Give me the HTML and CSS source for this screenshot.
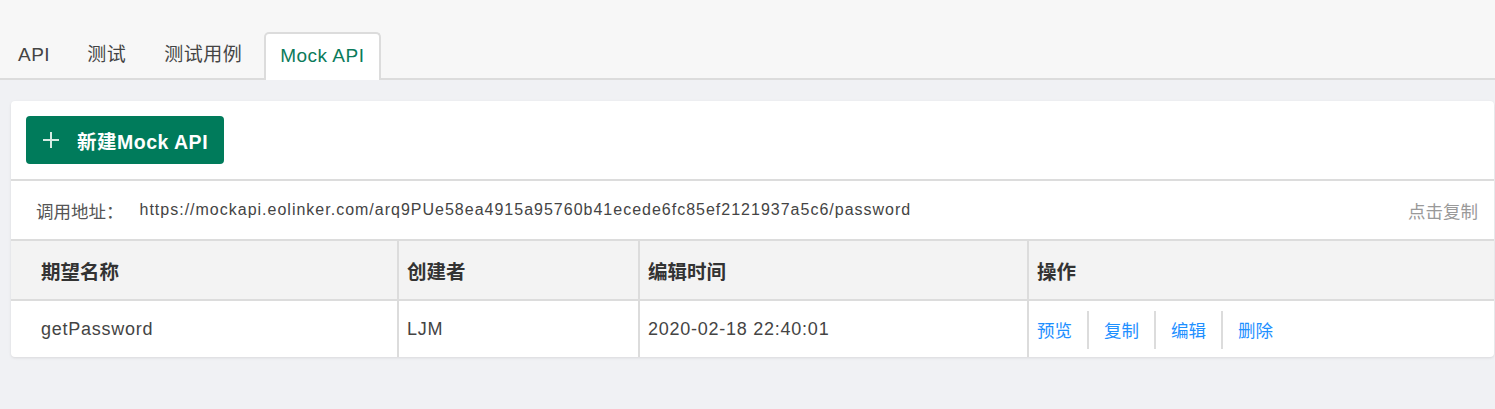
FILE: index.html
```html
<!DOCTYPE html>
<html lang="zh">
<head>
<meta charset="utf-8">
<title>Mock API</title>
<link rel="stylesheet" href="styles.css">
</head>
<body>
<div class="topbar">
  <div class="tabs">
    <div class="tab first">API</div>
    <div class="tab">测试</div>
    <div class="tab">测试用例</div>
    <div class="tab active">Mock API</div>
  </div>
</div>
<div class="main">
  <div class="card">
    <div class="toolbar">
      <button class="btn-new"><span class="plus"></span><span class="btn-label">新建Mock API</span></button>
    </div>
    <div class="address">
      <span class="addr-label">调用地址：</span>
      <span class="addr-url">https://mockapi.eolinker.com/arq9PUe58ea4915a95760b41ecede6fc85ef2121937a5c6/password</span>
      <span class="addr-copy">点击复制</span>
    </div>
    <div class="table">
      <div class="row head">
        <div class="cell c1">期望名称</div>
        <div class="cell c2">创建者</div>
        <div class="cell c3">编辑时间</div>
        <div class="cell c4">操作</div>
      </div>
      <div class="row body">
        <div class="cell c1 latin">getPassword</div>
        <div class="cell c2 latin">LJM</div>
        <div class="cell c3 latin">2020-02-18 22:40:01</div>
        <div class="cell c4 ops">
          <a class="op">预览</a><span class="sep"></span>
          <a class="op">复制</a><span class="sep"></span>
          <a class="op">编辑</a><span class="sep"></span>
          <a class="op">删除</a>
        </div>
      </div>
    </div>
  </div>
</div>
</body>
</html>
```

FILE: styles.css
```css
* { box-sizing: border-box; }
html, body { margin: 0; padding: 0; }
body {
  font-family: "Liberation Sans", Arial, "Noto Sans CJK SC", sans-serif;
  background: #f0f1f4;
  color: #333;
  height: 409px;
  overflow: hidden;
}
.topbar {
  background: #f7f7f7;
  height: 80px;
  border-bottom: 2px solid #dcdcdc;
  display: flex;
  align-items: flex-end;
}
.tabs {
  display: flex;
  align-items: flex-end;
  padding-left: 7px;
  margin-bottom: -2px;
}
.tab {
  font-size: 19px;
  letter-spacing: 0.5px;
  color: #444;
  height: 48px;
  line-height: 46px;
  padding: 0 11px;
  margin-right: 16px;
}
.tab.first {
  margin-right: 15px;
}
.tab.active {
  background: #fff;
  color: #0b7b5b;
  border: 2px solid #dcdcdc;
  border-bottom: none;
  border-radius: 5px 5px 0 0;
  padding: 0 15px 0 14px;
  margin-left: -5px;
  line-height: 44px;
}
.main {
  padding: 21px 1px 0 11px;
}
.card {
  background: #fff;
  border-radius: 4px;
  box-shadow: 0 1px 3px rgba(0,0,0,0.1);
  overflow: hidden;
}
.toolbar {
  padding: 15px;
  border-bottom: 2px solid #dcdcdc;
}
.btn-new {
  display: flex;
  align-items: center;
  height: 48px;
  padding: 0 16px 0 15px;
  background: #007b5b;
  border: none;
  border-radius: 4px;
  color: #fff;
  font-family: inherit;
  font-size: 19.5px;
  letter-spacing: 0.5px;
  font-weight: bold;
}
.plus {
  position: relative;
  width: 16px;
  height: 16px;
  margin-right: 18px;
  margin-left: 2px;
}
.plus::before, .plus::after {
  content: "";
  position: absolute;
  background: #d6ece4;
}
.plus::before { left: 0; top: 7px; width: 16px; height: 2px; }
.plus::after { left: 7px; top: 0; width: 2px; height: 16px; }
.address {
  display: flex;
  align-items: center;
  height: 60px;
  padding: 0 16px 0 25px;
  border-bottom: 2px solid #dcdcdc;
}
.addr-label {
  font-size: 17.5px;
  color: #555;
  margin-right: 16px;
}
.addr-url {
  font-size: 16px;
  letter-spacing: 1px;
  color: #444;
  flex: 1;
}
.addr-copy {
  font-size: 17.5px;
  color: #999;
}
.row {
  display: grid;
  grid-template-columns: 386px 241px 389px 1fr;
}
.row.head {
  background: #f3f3f3;
  height: 60px;
  border-bottom: 2px solid #dcdcdc;
}
.row.body {
  height: 56px;
}
.cell {
  display: flex;
  align-items: center;
  padding-left: 8px;
  font-size: 17.5px;
  color: #333;
  border-left: 2px solid #dcdcdc;
}
.cell.c1 {
  border-left: none;
  padding-left: 30px;
}
.head .cell {
  font-weight: bold;
  font-size: 19.5px;
  color: #333;
}
.body .cell { color: #444; padding-top: 1px; }
.body .cell.latin {
  font-size: 18px;
  letter-spacing: 0.75px;
}
.ops .op {
  color: #1e90ff;
  font-size: 17.5px;
  cursor: pointer;
}
.ops .sep {
  width: 2px;
  height: 38px;
  background: #dcdcdc;
  margin: 0 15px;
}
```
